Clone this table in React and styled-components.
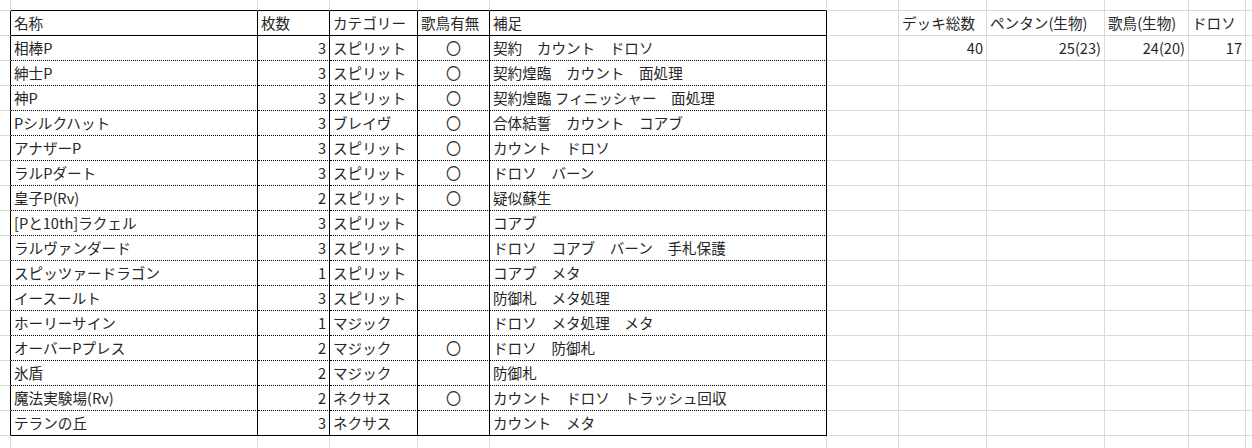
import React from "react";
import styled, { createGlobalStyle } from "styled-components";

const GRID = "#dadada";
const INK = "#000";

const GlobalStyle = createGlobalStyle`
  html, body {
    margin: 0;
    padding: 0;
    background: #fff;
    overflow: hidden;
  }
  body {
    font-family: "Noto Sans CJK JP", "Noto Sans", sans-serif;
    color: #262626;
  }
`;

const Sheet = styled.div`
  display: flex;
  flex-direction: column;
  width: 1252px;
  height: 448px;
  overflow: hidden;
`;

const SheetRow = styled.div`
  display: grid;
  grid-template-columns: 11px 247px 72px 88px 72px 337px 72px 88px 118px 84px 57px 1fr;
  height: ${(p) => p.$h}px;
  flex: none;
`;

const Cell = styled.div`
  box-sizing: border-box;
  display: flex;
  align-items: flex-end;
  justify-content: ${(p) =>
    p.$align === "right" ? "flex-end" : p.$align === "center" ? "center" : "flex-start"};
  padding: 0 3px 2px 3px;
  overflow: hidden;
  white-space: pre;
  font-size: 14.6px;
  line-height: 20px;
  border-right: 1px solid ${(p) => (p.$rightInk ? INK : GRID)};
  border-bottom: 1px ${(p) => (p.$bottom === "dotted" ? "dotted" : "solid")}
    ${(p) => (p.$bottom === "dotted" || p.$bottom === "solid" ? INK : GRID)};
`;

const Mark = styled.span`
  font-size: 15px;
  line-height: 20px;
  color: #333;
`;

const header = ["名称", "枚数", "カテゴリー", "歌鳥有無", "補足"];

const cards = [
  ["相棒P", 3, "スピリット", true, "契約　カウント　ドロソ"],
  ["紳士P", 3, "スピリット", true, "契約煌臨　カウント　面処理"],
  ["神P", 3, "スピリット", true, "契約煌臨 フィニッシャー　面処理"],
  ["Pシルクハット", 3, "ブレイヴ", true, "合体結誓　カウント　コアブ"],
  ["アナザーP", 3, "スピリット", true, "カウント　ドロソ"],
  ["ラルPダート", 3, "スピリット", true, "ドロソ　バーン"],
  ["皇子P(Rv)", 2, "スピリット", true, "疑似蘇生"],
  ["[Pと10th]ラクェル", 3, "スピリット", false, "コアブ"],
  ["ラルヴァンダード", 3, "スピリット", false, "ドロソ　コアブ　バーン　手札保護"],
  ["スピッツァードラゴン", 1, "スピリット", false, "コアブ　メタ"],
  ["イースールト", 3, "スピリット", false, "防御札　メタ処理"],
  ["ホーリーサイン", 1, "マジック", false, "ドロソ　メタ処理　メタ"],
  ["オーバーPプレス", 2, "マジック", true, "ドロソ　防御札"],
  ["氷盾", 2, "マジック", false, "防御札"],
  ["魔法実験場(Rv)", 2, "ネクサス", true, "カウント　ドロソ　トラッシュ回収"],
  ["テランの丘", 3, "ネクサス", false, "カウント　メタ"],
];

const summaryHead = ["デッキ総数", "ペンタン(生物)", "歌鳥(生物)", "ドロソ"];
const summaryVals = ["40", "25(23)", "24(20)", "17"];

function SideCells({ values, align }) {
  return (
    <>
      <Cell />
      {[0, 1, 2, 3].map((i) => (
        <Cell key={i} $align={align}>
          {values ? values[i] : ""}
        </Cell>
      ))}
      <Cell />
    </>
  );
}

function TableRow({ cells, bottom, side, sideAlign }) {
  const [name, count, cat, mark, note] = cells;
  return (
    <SheetRow $h={25}>
      <Cell $rightInk />
      <Cell $rightInk $bottom={bottom}>{name}</Cell>
      <Cell $rightInk $bottom={bottom} $align={typeof count === "number" ? "right" : "left"}>
        {count}
      </Cell>
      <Cell $rightInk $bottom={bottom}>{cat}</Cell>
      <Cell $rightInk $bottom={bottom} $align={mark === true ? "center" : "left"}>
        {mark === true ? <Mark>〇</Mark> : mark || ""}
      </Cell>
      <Cell $rightInk $bottom={bottom}>{note}</Cell>
      <SideCells values={side} align={sideAlign} />
    </SheetRow>
  );
}

function PlainRow({ h, topOfTable }) {
  return (
    <SheetRow $h={h}>
      <Cell />
      {[0, 1, 2, 3, 4].map((i) => (
        <Cell key={i} $bottom={topOfTable ? "solid" : undefined} />
      ))}
      <SideCells />
    </SheetRow>
  );
}

export default function App() {
  return (
    <>
      <GlobalStyle />
      <Sheet>
        <PlainRow h={11} topOfTable />
        <TableRow cells={header} bottom="solid" side={summaryHead} sideAlign="left" />
        {cards.map((c, i) => (
          <TableRow
            key={c[0]}
            cells={c}
            bottom={i === cards.length - 1 ? "solid" : "dotted"}
            side={i === 0 ? summaryVals : null}
            sideAlign="right"
          />
        ))}
        <PlainRow h={25} />
      </Sheet>
    </>
  );
}
